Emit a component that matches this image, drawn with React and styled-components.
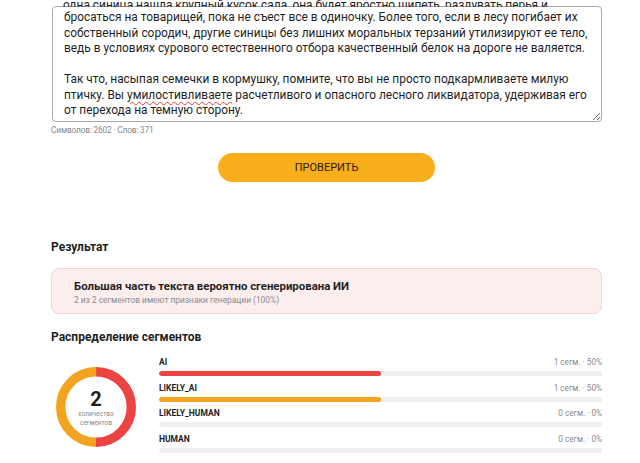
import React, { useLayoutEffect, useRef } from "react";
import styled, { createGlobalStyle } from "styled-components";

const COLORS = {
  text: "#1f1f1f",
  muted: "#8a8a8a",
  border: "#a9a9a9",
  yellow: "#f9ae1c",
  red: "#ec4343",
  orange: "#f2a31f",
  track: "#efefef",
  alertBg: "#fdeeee",
  alertBorder: "#f3d3d3",
};

const GlobalStyle = createGlobalStyle`
  html, body {
    margin: 0;
    padding: 0;
    background: #fff;
  }
  body {
    font-family: Roboto, "Noto Sans", sans-serif;
    color: ${COLORS.text};
    overflow: hidden;
  }
`;

const EDITOR_LINES = [
  "бросаться на товарищей, пока не съест все в одиночку. Более того, если в лесу погибает их",
  "собственный сородич, другие синицы без лишних моральных терзаний утилизируют ее тело,",
  "ведь в условиях сурового естественного отбора качественный белок на дороге не валяется.",
];

const SEGMENTS = [
  { key: "AI", count: 1, percent: 50, color: COLORS.red },
  { key: "LIKELY_AI", count: 1, percent: 50, color: COLORS.orange },
  { key: "LIKELY_HUMAN", count: 0, percent: 0, color: COLORS.orange },
  { key: "HUMAN", count: 0, percent: 0, color: COLORS.orange },
];

const Donut = () => {
  const r = 35.3;
  const half = Math.PI * r;
  return (
    <DonutWrapper>
      <svg width="80" height="80" viewBox="0 0 80 80">
        {/* right half, drawn clockwise from the top */}
        <circle
          cx="40"
          cy="40"
          r={r}
          fill="none"
          stroke={COLORS.red}
          strokeWidth="9.4"
          strokeDasharray={`${half} ${half * 2}`}
          transform="rotate(-90 40 40)"
        />
        <circle
          cx="40"
          cy="40"
          r={r}
          fill="none"
          stroke={COLORS.orange}
          strokeWidth="9.4"
          strokeDasharray={`${half} ${half * 2}`}
          transform="rotate(90 40 40)"
        />
      </svg>
      <DonutLabel>
        <DonutNumber>2</DonutNumber>
        <DonutCaption>
          количество
          <br />
          сегментов
        </DonutCaption>
      </DonutLabel>
    </DonutWrapper>
  );
};

const App = () => {
  const editorRef = useRef(null);

  useLayoutEffect(() => {
    const el = editorRef.current;
    // scrolled to the end of the text
    if (el) el.scrollTop = el.scrollHeight;
  }, []);

  return (
    <Page>
      <GlobalStyle />
      <CutLine>
        <Line>
          одна синица нашла крупный кусок сала, она будет яростно шипеть,
          раздувать перья и
        </Line>
      </CutLine>
      <Editor ref={editorRef}>
        <Spacer />
        {EDITOR_LINES.map((line) => (
          <Line key={line}>{line}</Line>
        ))}
        <Line>&nbsp;</Line>
        <Line>
          Так что, насыпая семечки в кормушку, помните, что вы не просто
          подкармливаете милую
        </Line>
        <Line>
          птичку. Вы <Misspelled>умилостивливаете</Misspelled> расчетливого и
          опасного лесного ликвидатора, удерживая его
        </Line>
        <Line>от перехода на темную сторону.</Line>
      </Editor>
      <Counter>Символов: 2602 · Слов: 371</Counter>

      <ButtonRow>
        <CheckButton>ПРОВЕРИТЬ</CheckButton>
      </ButtonRow>

      <SectionTitle>Результат</SectionTitle>
      <Alert>
        <AlertTitle>Большая часть текста вероятно сгенерирована ИИ</AlertTitle>
        <AlertText>2 из 2 сегментов имеют признаки генерации (100%)</AlertText>
      </Alert>

      <SectionTitle $spaced>Распределение сегментов</SectionTitle>
      <Distribution>
        <Donut />
        <Bars>
          {SEGMENTS.map((s) => (
            <BarRow key={s.key}>
              <BarHead>
                <BarLabel>{s.key}</BarLabel>
                <BarValue>
                  {s.count} сегм. · {s.percent}%
                </BarValue>
              </BarHead>
              <Track>
                <Fill style={{ width: `${s.percent}%` }} $color={s.color} />
              </Track>
            </BarRow>
          ))}
        </Bars>
      </Distribution>
    </Page>
  );
};

const Page = styled.div`
  width: 551px;
  margin-left: 51px;
  display: flex;
  flex-direction: column;
`;

const Line = styled.div`
  height: 15.5px;
  line-height: 15.5px;
  white-space: nowrap;
  font-size: 11.9px;
`;

const CutLine = styled.div`
  height: 7px;
  overflow: hidden;
  padding-left: 12px;
  margin-bottom: -1px;
  display: flex;
  flex-direction: column;
  justify-content: flex-end;
  position: relative;
  z-index: 1;

  ${Line} {
    flex-shrink: 0;
    margin-bottom: -6px;
  }
`;

const Editor = styled.div`
  box-sizing: border-box;
  height: 116px;
  margin-left: 1px;
  padding: 7px 0 2px 11px;
  border: 1px solid ${COLORS.border};
  border-radius: 4px;
  overflow-y: scroll;
  resize: vertical;

  &::-webkit-scrollbar {
    width: 9px;
  }
  &::-webkit-scrollbar-track {
    background: #fff;
  }
  &::-webkit-scrollbar-thumb {
    background: #c9c9c9;
    border: 2px solid #fff;
    border-radius: 3px;
  }
  &::-webkit-scrollbar-button:single-button {
    display: block;
    height: 12px;
    background: #fff;
  }
  &::-webkit-scrollbar-corner {
    background: #fff;
  }
`;

const Spacer = styled.div`
  height: 460px;
`;

const Misspelled = styled.span`
  text-decoration: underline wavy #e0403a;
  text-decoration-thickness: 1px;
  text-underline-offset: 2px;
`;

const Counter = styled.div`
  margin-top: 2px;
  font-size: 8.4px;
  letter-spacing: -0.2px;
  line-height: 13px;
  color: ${COLORS.muted};
`;

const ButtonRow = styled.div`
  display: flex;
  justify-content: center;
  margin-top: 16px;
`;

const CheckButton = styled.button`
  width: 217px;
  height: 29px;
  border: none;
  border-radius: 15px;
  background: ${COLORS.yellow};
  color: #2a1a05;
  font-family: Roboto, sans-serif;
  font-size: 11px;
  cursor: pointer;
`;

const SectionTitle = styled.h2`
  margin: ${(p) => (p.$spaced ? "14px" : "56px")} 0 0;
  font-size: 12px;
  line-height: 18px;
  font-weight: 700;
`;

const Alert = styled.div`
  box-sizing: border-box;
  height: 46px;
  margin-top: 12px;
  padding: 9px 22px;
  background: ${COLORS.alertBg};
  border: 1px solid ${COLORS.alertBorder};
  border-radius: 8px;
`;

const AlertTitle = styled.div`
  font-size: 11.4px;
  line-height: 16px;
  font-weight: 700;
`;

const AlertText = styled.div`
  font-size: 8.4px;
  line-height: 12px;
  color: ${COLORS.muted};
`;

const Distribution = styled.div`
  display: flex;
  align-items: flex-start;
  gap: 23px;
  margin-top: 10px;
`;

const DonutWrapper = styled.div`
  position: relative;
  width: 80px;
  height: 80px;
  margin: 11px 0 0 5px;
  flex-shrink: 0;
`;

const DonutLabel = styled.div`
  position: absolute;
  inset: 0;
  display: flex;
  flex-direction: column;
  align-items: center;
  justify-content: center;
  padding-top: 2px;
`;

const DonutNumber = styled.div`
  font-size: 20px;
  line-height: 22px;
  font-weight: 700;
`;

const DonutCaption = styled.div`
  font-size: 6.5px;
  line-height: 9px;
  color: ${COLORS.muted};
  text-align: center;
`;

const Bars = styled.div`
  flex: 1;
  display: flex;
  flex-direction: column;
  gap: 5.5px;
`;

const BarRow = styled.div`
  display: flex;
  flex-direction: column;
  gap: 3px;
`;

const BarHead = styled.div`
  display: flex;
  justify-content: space-between;
  align-items: center;
  height: 12px;
`;

const BarLabel = styled.span`
  font-size: 8.5px;
  font-weight: 700;
`;

const BarValue = styled.span`
  font-size: 8.2px;
  color: ${COLORS.muted};
`;

const Track = styled.div`
  height: 5px;
  border-radius: 3px;
  background: ${COLORS.track};
  overflow: hidden;
`;

const Fill = styled.div`
  height: 100%;
  border-radius: 3px;
  background: ${(p) => p.$color};
`;

export default App;
